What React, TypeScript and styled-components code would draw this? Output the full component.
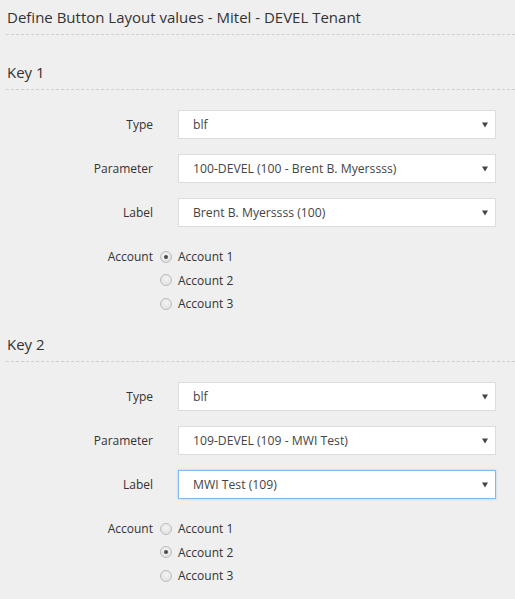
import React from "react";
import styled, { createGlobalStyle } from "styled-components";

const Global = createGlobalStyle`
  html, body { margin: 0; padding: 0; }
  body {
    background: #efefef;
    font-family: "Open Sans", "DejaVu Sans", sans-serif;
    color: #333;
  }
`;

const Page = styled.div`
  padding-left: 6px;
  padding-bottom: 20px;
`;

const Title = styled.h1`
  margin: 0 0 27px;
  padding: 7px 0 7px 1px;
  font-size: 15px;
  font-weight: 400;
  line-height: 20px;
  color: #333;
  border-bottom: 1px dashed #cfcfcf;
`;

const Section = styled.section`
  & + & {
    margin-top: 18.5px;
  }
`;

const Heading = styled.h2`
  margin: 0 0 20px;
  padding: 0 0 7px 1px;
  font-size: 15px;
  font-weight: 400;
  line-height: 20px;
  color: #333;
  border-bottom: 1px dashed #cfcfcf;
`;

const Fields = styled.div`
  display: flex;
  flex-direction: column;
  gap: 15px;
  padding-right: 19px;
`;

const Row = styled.div`
  display: grid;
  grid-template-columns: 147px 1fr;
  column-gap: 25px;
  align-items: center;
`;

const Label = styled.div`
  text-align: right;
  font-size: 12px;
  color: #333;
`;

const SelectBox = styled.div<{ $focused?: boolean }>`
  position: relative;
  box-sizing: border-box;
  height: 29px;
  display: flex;
  align-items: center;
  padding: 0 30px 0 14px;
  background: #fff;
  border: 1px solid ${(p) => (p.$focused ? "#86b8e8" : "#dcdcdc")};
  box-shadow: ${(p) => (p.$focused ? "0 0 2px rgba(102,175,233,0.5)" : "none")};
  font-size: 12.2px;
  color: #444;
`;

const Caret = styled.svg`
  position: absolute;
  right: 7px;
  top: 50%;
  margin-top: -3px;
  width: 6px;
  height: 6px;
`;

const AccountRow = styled.div`
  display: grid;
  grid-template-columns: 147px 1fr;
  column-gap: 7px;
  margin-top: 18px;
  padding-right: 19px;
`;

const AccountLabel = styled.div`
  text-align: right;
  font-size: 12px;
  line-height: 23.5px;
  color: #333;
`;

const RadioList = styled.div`
  display: flex;
  flex-direction: column;
`;

const RadioItem = styled.label`
  display: flex;
  align-items: center;
  gap: 6px;
  height: 23.5px;
  font-size: 12px;
  color: #333;
`;

const RadioCircle = styled.span<{ $checked?: boolean }>`
  box-sizing: border-box;
  width: 12px;
  height: 12px;
  border-radius: 50%;
  border: 1px solid #bdbdbd;
  background: radial-gradient(circle at 50% 35%, #f4f4f4 0%, #dcdcdc 100%);
  display: flex;
  align-items: center;
  justify-content: center;
  &::after {
    content: "";
    display: ${(p) => (p.$checked ? "block" : "none")};
    width: 4px;
    height: 4px;
    border-radius: 50%;
    background: #4a4a4a;
  }
`;

type Key = {
  name: string;
  param: string;
  label: string;
  account: number;
  focusedLabel?: boolean;
};

const keys: Key[] = [
  {
    name: "Key 1",
    param: "100-DEVEL (100 - Brent B. Myerssss)",
    label: "Brent B. Myerssss (100)",
    account: 1,
  },
  {
    name: "Key 2",
    param: "109-DEVEL (109 - MWI Test)",
    label: "MWI Test (109)",
    account: 2,
    focusedLabel: true,
  },
];

function Select({ value, focused }: { value: string; focused?: boolean }) {
  return (
    <SelectBox $focused={focused}>
      {value}
      <Caret viewBox="0 0 6 6">
        <polygon points="0,0.5 6,0.5 3,5.5" fill="#444" />
      </Caret>
    </SelectBox>
  );
}

export default function App() {
  return (
    <>
      <Global />
      <Page>
        <Title>Define Button Layout values - Mitel - DEVEL Tenant</Title>
        {keys.map((k) => (
          <Section key={k.name}>
            <Heading>{k.name}</Heading>
            <Fields>
              <Row>
                <Label>Type</Label>
                <Select value="blf" />
              </Row>
              <Row>
                <Label>Parameter</Label>
                <Select value={k.param} />
              </Row>
              <Row>
                <Label>Label</Label>
                <Select value={k.label} focused={k.focusedLabel} />
              </Row>
            </Fields>
            <AccountRow>
              <AccountLabel>Account</AccountLabel>
              <RadioList>
                {[1, 2, 3].map((n) => (
                  <RadioItem key={n}>
                    <RadioCircle $checked={k.account === n} />
                    Account {n}
                  </RadioItem>
                ))}
              </RadioList>
            </AccountRow>
          </Section>
        ))}
      </Page>
    </>
  );
}
